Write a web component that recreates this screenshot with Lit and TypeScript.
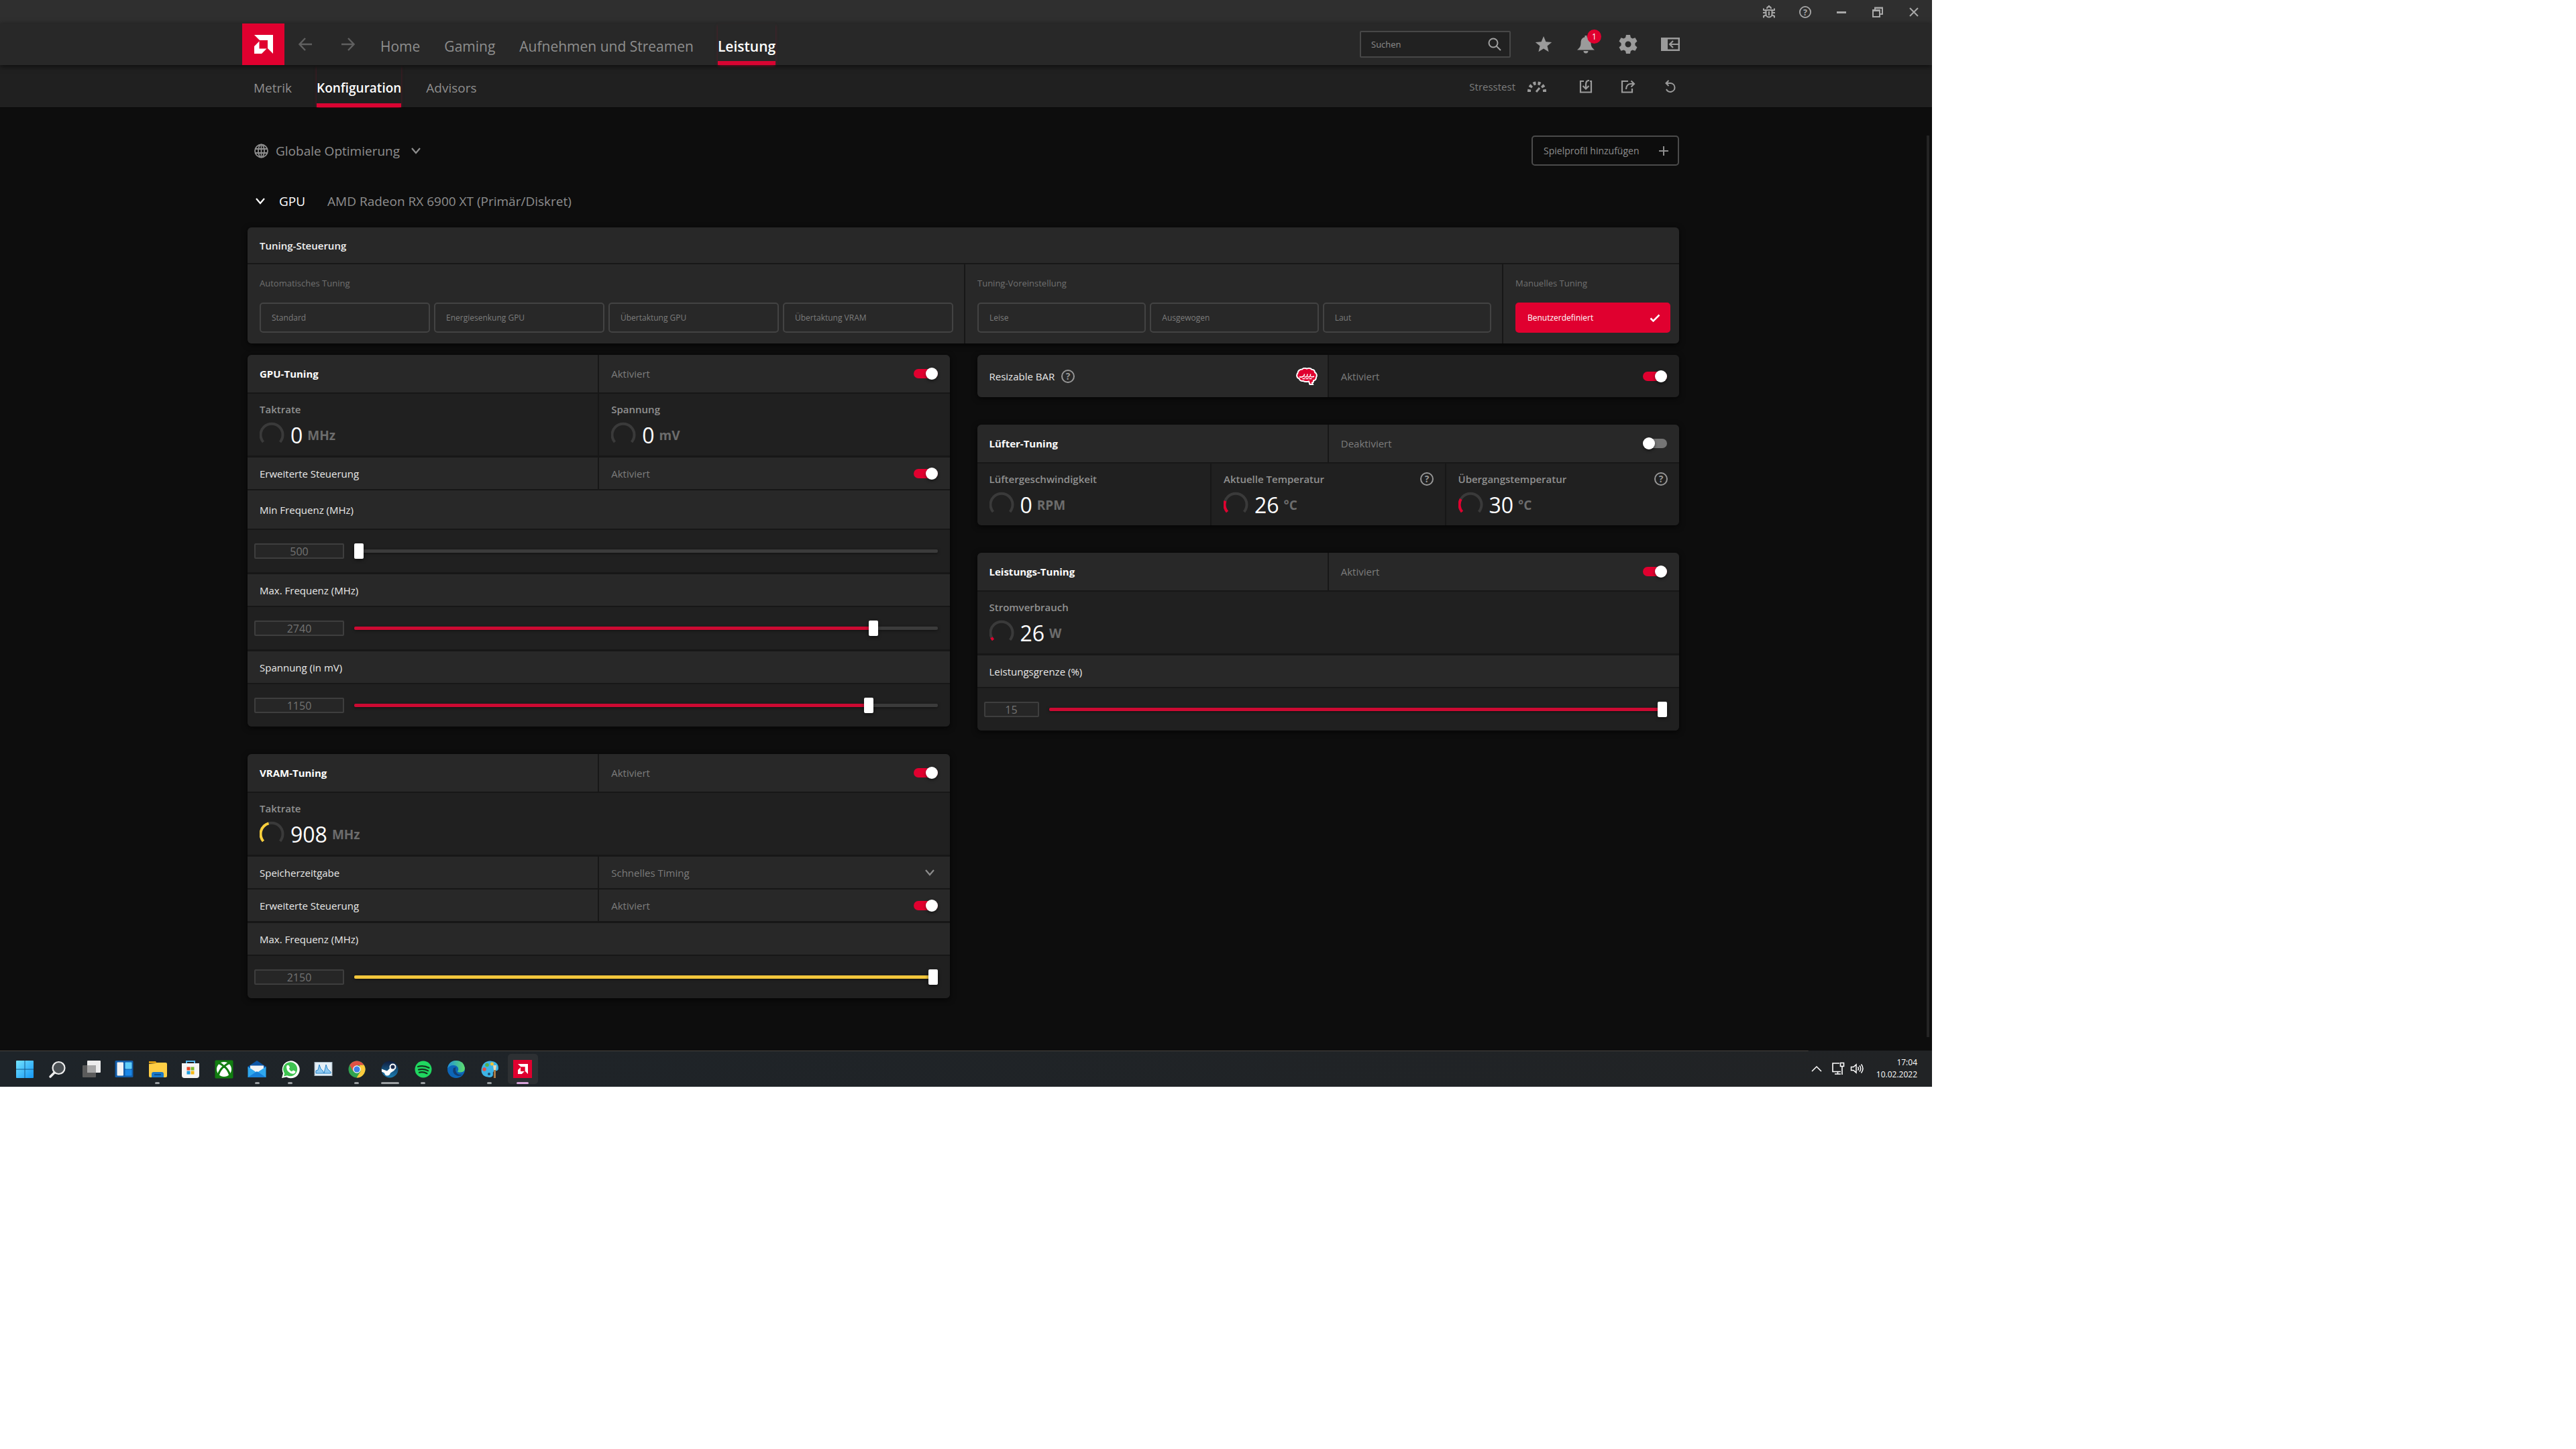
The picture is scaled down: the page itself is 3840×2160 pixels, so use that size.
import { LitElement, html, svg, css, nothing, type TemplateResult } from "lit";
import { customElement, property } from "lit/decorators.js";
import { classMap } from "lit/directives/class-map.js";
import { styleMap } from "lit/directives/style-map.js";

type Part = TemplateResult | typeof nothing;

const stroke = (w: number, h: number, body: unknown, width = 2, box = `0 0 ${w} ${h}`) => html`
  <svg width=${w} height=${h} viewBox=${box} fill="none" stroke="currentColor" stroke-width=${width} aria-hidden="true">${body}</svg>`;
const solid = (w: number, h: number, body: unknown, box = `0 0 ${w} ${h}`) => html`
  <svg width=${w} height=${h} viewBox=${box} fill="currentColor" aria-hidden="true">${body}</svg>`;

const chevronDown = stroke(16, 10, svg`<path d="M2 1l6 7 6-7"/>`, 2.200);
const helpIcon = (size: number) => stroke(size, size, svg`
  <circle cx="10" cy="10" r="9"/>
  <text x="10" y="15" text-anchor="middle" font-size="14" font-weight="700" fill="currentColor" stroke="none">?</text>`, 2, "0 0 20 20");
const amdMark = (size: number) => solid(size, size, svg`
  <path d="M0 0h28v28l-8-8V8H8z"/><path d="M7.500 9.500L0 17v11h11l7.500-7.500h-11z"/>`, "0 0 28 28");

const icons = {
  back: stroke(20, 20, svg`<path d="M20 10H2M10 1l-8.500 9 8.500 9"/>`, 2.400),
  forward: stroke(20, 20, svg`<path d="M0 10h18M10 1l8.500 9-8.500 9"/>`, 2.400),
  search: stroke(20, 20, svg`<circle cx="8" cy="8" r="6.500"/><path d="M12.500 12.500l6.500 6.500"/>`),
  bug: stroke(20, 20, svg`<path d="M7 5a3 3 0 0 1 6 0M5.500 7h9v6a4.500 4.500 0 0 1-9 0zM1 11h4.500M14.500 11H19M2 4.500v2.500l3.500 1M18 4.500V7l-3.500 1M2 18.500V16l3.500-1.500M18 18.500V16l-3.500-1.500M10 9v6"/><path d="M10 0v3" />`),
  minimise: solid(14, 4, svg`<path d="M0 1h14v3H0z"/>`),
  restore: stroke(16, 16, svg`<path d="M1 5h10v10H1zM4 4V1.500h11V11h-3"/><path d="M1 6h10M4 2h11" />`),
  close: stroke(14, 14, svg`<path d="M1 1l12 12M13 1L1 13"/>`),
  star: solid(26, 26, svg`<path d="M13 1l3.400 8.200 8.800.7-6.700 5.700 2.100 8.700L13 19.600l-7.600 4.700 2.100-8.700L.8 9.900l8.800-.7z"/>`),
  bell: solid(28, 28, svg`<path d="M12.500 1h3v2.200c4 .9 6 4 6 8.300 0 5.500 1.500 7.500 5.500 11H1c4-3.500 5.500-5.500 5.500-11 0-4.300 2-7.400 6-8.300zM10.500 24h7a3.500 3.500 0 0 1-7 0z"/>`),
  gear: solid(28, 28, svg`<path fill-rule="evenodd" d="M11 0h6l.9 4.100 2.600 1.500 4-1.300 3 5.200-3.100 2.900v3.200l3.100 2.900-3 5.200-4-1.300-2.600 1.500L17 28h-6l-.9-4-2.600-1.500-4 1.300-3-5.200 3.100-2.900v-3.200L.5 9.500l3-5.200 4 1.300 2.600-1.500zM14 9.500a4.500 4.500 0 1 0 0 9 4.500 4.500 0 0 0 0-9z"/>`),
  panel: html`<svg width="28" height="20" viewBox="0 0 28 20" fill="none" stroke="currentColor" stroke-width="2.500" aria-hidden="true">
    <path d="M1.200 1.200h25.600v17.600H1.200z"/><path d="M1 1h9v18H1z" fill="currentColor" stroke="none"/><path d="M27 10H13M18 5l-5 5 5 5" stroke-width="2.200"/></svg>`,
  stress: stroke(28, 18, svg`<path d="M2.500 17v-1a11.500 12 0 0 1 23 0v1" pathLength="100" stroke-width="5" stroke-dasharray="10 8"/><path d="M13 17l5-6" stroke-width="3"/>`),
  importIcon: stroke(20, 20, svg`<path d="M7 2H2v16.500h16V2h-2"/><path d="M15 1c-4 0-5 3-5 6v6M5.500 9l4.500 4.500L14.500 9"/>`, 2.200),
  exportIcon: stroke(22, 20, svg`<path d="M11 2H2v16.500h15V13"/><path d="M8 14c0-5 3-8 6-8h6M15.500 1.500L20 6l-4.500 4.500"/>`, 2.200),
  reset: stroke(18, 20, svg`<path d="M3 5h6.500a6.500 6.500 0 1 1-6.500 9M6.500 1L2.500 5l4 4"/>`),
  globe: stroke(22, 22, svg`<circle cx="10.500" cy="11" r="9.500"/><ellipse cx="10.500" cy="11" rx="4.500" ry="9.500"/><path d="M1.500 8h18M1.500 14h18M10.500 1v20"/>`, 1.800),
  plus: stroke(14, 14, svg`<path d="M7 0v14M0 7h14"/>`),
  check: stroke(16, 12, svg`<path d="M1.500 6.500L5.500 10.500 14.500 1.500"/>`, 2.500),
  brain: html`<svg width="32" height="26" viewBox="0 0 32 26" aria-hidden="true">
    <path d="M9 2.500c2-2 5-1.800 7-.8 2-1 5.500-.9 7.500 1C26.500 3 28 5 28 7c3 1.500 3.500 5 2 7.500 0 3-2 4.500-4 4.800.2 2-.5 3-2 3.200L25 25h-4.500l-1.500-4.500c-4 1-7 .5-8.500-.7-3 .5-5.500-1-5.700-3.300C1 15.500 0 11 2.500 8 2.500 5 5.500 2.500 9 2.500z" fill="#e0002f" stroke="#fff" stroke-width="2"/>
    <path d="M5 13.500c2 1.500 4 .5 6-.5 1-.5 1.500-1.500 1.500-3.500M12.500 13.500c2 1 4.500.5 4.500-4M17 13.500c2 1 5 .5 4.500-4M22 13.500c2 .5 3.500.3 5-.5" fill="none" stroke="#fff" stroke-width="1.600"/>
    <path d="M9.500 16.500h14" stroke="#fff" stroke-width="1.600" stroke-dasharray="4 1"/></svg>`,
  caretUp: stroke(16, 10, svg`<path d="M1 9l7-7 7 7"/>`, 1.500),
  network: stroke(20, 20, svg`<path d="M12 2H2v12.500h12M5 18h9M9.500 14.500V18"/><path d="M13.500 1.500h5v5h-5zM16 7v12" />`, 1.600),
  speaker: stroke(20, 16, svg`<path d="M1.500 5.500H5L9 2v12l-4-3.500H1.500z"/><path d="M11.500 5.500q2 2.500 0 5M14 3.500q3.500 4.500 0 9M16.500 1.500q5 6.500 0 13"/>`, 1.500),
};

const app = (body: unknown) => html`<svg width="28" height="28" viewBox="0 0 28 28" aria-hidden="true">${body}</svg>`;

interface TaskApp { name: string; mark?: "dot" | "wide"; active?: boolean; icon: Part }

const taskApps: TaskApp[] = [
  { name: "Start", icon: app(svg`
      <defs><linearGradient id="w" x1="0" y1="0" x2="1" y2="1"><stop offset="0" stop-color="#74e4ff"/><stop offset="1" stop-color="#1597f5"/></linearGradient></defs>
      <rect x="1" y="1" width="26" height="26" rx="1" fill="url(#w)"/><path d="M14 1v26M1 14h26" stroke="#14598a" stroke-width="1"/>`) },
  { name: "Suche", icon: app(svg`
      <circle cx="15.500" cy="12" r="9" fill="#4b5054" stroke="#ececec" stroke-width="2.200"/><path d="M9 19l-6 6" stroke="#ececec" stroke-width="3.500" stroke-linecap="round"/>`) },
  { name: "Taskansicht", icon: app(svg`
      <rect x="8" y="1" width="20" height="18" rx="1" fill="#ececec"/><rect x="1" y="8" width="20" height="18" rx="1" fill="#5b5b5b"/><path d="M8 8h13v11H8z" fill="#a5a5a5"/>`) },
  { name: "Widgets", icon: app(svg`
      <rect x=".5" y="1" width="27" height="25" rx="1.500" fill="#125ca8"/><rect x="3.500" y="3.500" width="9.500" height="20" rx="1" fill="#f3f3f3"/><rect x="15.500" y="3.500" width="10" height="10" rx="1" fill="#60cdf9"/><rect x="15.500" y="14.500" width="10" height="9" rx="1" fill="#1a86e6"/>`) },
  { name: "Explorer", mark: "dot", icon: app(svg`
      <path d="M1 2h10l2 3h-12z" fill="#d99a12"/><path d="M1 6l10-1 2-1h13q2 0 2 2v18q0 2-2 2H3q-2 0-2-2z" fill="#ffce45"/><path d="M5 26v-5q0-3 3-3h12q3 0 3 3v5z" fill="#1b78c8"/><path d="M9 22h10" stroke="#0c4f90" stroke-width="2"/>`) },
  { name: "Store", icon: app(svg`
      <path d="M8 6V2h12v4" fill="none" stroke="#55b8ee" stroke-width="2"/><path d="M1 5h26v18q0 4-4 4H5q-4 0-4-4z" fill="#f6f6f6"/>
      <path d="M8.500 10.500h5v5h-5z" fill="#e5482a"/><path d="M14.500 10.500h5v5h-5z" fill="#7cb82f"/><path d="M8.500 16.500h5v5h-5z" fill="#1e9fe0"/><path d="M14.500 16.500h5v5h-5z" fill="#f8b916"/>`) },
  { name: "Xbox", icon: app(svg`
      <rect x=".5" y=".5" width="27" height="27" rx="1.500" fill="#117d10"/><circle cx="14" cy="14" r="11" fill="#fff"/>
      <path d="M6 5q3 0 8 5 5-5 8-5M5.500 22Q8 14 14 9.500 20 14 22.500 22" fill="none" stroke="#117d10" stroke-width="3"/>`) },
  { name: "Mail", mark: "dot", icon: app(svg`
      <path d="M.5 10L14 1l13.500 9v4H.500z" fill="#0d55a5"/><path d="M4 8.500h20v8L14 22 4 16z" fill="#f4f4f4"/><path d="M.5 10L14 19l13.500-9v16H.500z" fill="#2fa7ee"/><path d="M27.500 26L14 17 .5 26z" fill="#1780d8"/>`) },
  { name: "WhatsApp", mark: "dot", icon: app(svg`
      <path d="M1 27l2-7A13 13 0 1 1 8 25.500z" fill="#fff"/><path d="M4 24.500l1.200-4.500a10.500 10.500 0 1 1 3.800 3.200z" fill="#3fc351"/>
      <path d="M9 8q2-1 3 1l1 2q0 1-1.200 2.200 1.500 3 4.200 4l1.500-1.500q.5-.5 1.500 0l2.500 1.500q-.3 3.300-4 3.600Q8.500 19 8 11q0-2 1-3z" fill="#fff"/>`) },
  { name: "Leistungsmonitor", icon: app(svg`
      <rect x="1" y="3.500" width="26" height="20" fill="#e4eef5" stroke="#9fb0bd"/><path d="M3 20v-4l3-1 2-8 2 6 3 3 2 4 3-13 2 6 5 5v2z" fill="#8cc9f2" stroke="#2f86c9"/>`) },
  { name: "Chrome", mark: "dot", icon: app(svg`
      <circle cx="14" cy="14" r="12.500" fill="#31a350"/><path d="M3.200 7.700A12.500 12.500 0 0 1 24.800 7.700L14 8l-5.500 9z" fill="#de5145"/><path d="M24.800 7.700A12.500 12.500 0 0 1 13.500 26.500L19.500 17 18 7.700z" fill="#fccb3d"/>
      <circle cx="14" cy="14" r="5.800" fill="#fff"/><circle cx="14" cy="14" r="4.600" fill="#3f7fe8"/>`) },
  { name: "Steam", mark: "wide", icon: app(svg`
      <defs><linearGradient id="s" x1="0" y1="0" x2="0" y2="1"><stop offset="0" stop-color="#101c3c"/><stop offset="1" stop-color="#1b7fb4"/></linearGradient></defs>
      <circle cx="14" cy="14" r="12.500" fill="url(#s)"/><path d="M2 13.500l8 3 6-6 5 5-6 4q-1 4-5 4-3 0-4-4l-4-2z" fill="#fff"/><circle cx="18.500" cy="10.500" r="4" fill="#1b2b4d" stroke="#fff" stroke-width="2"/>`) },
  { name: "Spotify", mark: "dot", icon: app(svg`
      <circle cx="14" cy="14" r="12.500" fill="#20d760"/><path d="M6 10q8.500-2.500 16.500 1.800M7 14.500q7.500-2 14 1.600M8 18.700q6-1.500 11.500 1.500" fill="none" stroke="#14351f" stroke-width="2.200" stroke-linecap="round"/>`) },
  { name: "Edge", icon: app(svg`
      <defs><linearGradient id="e" x1="0" y1="0" x2="1" y2="0"><stop offset="0" stop-color="#1f8fdc"/><stop offset="1" stop-color="#5fe06a"/></linearGradient></defs>
      <circle cx="14" cy="14" r="13" fill="#0c65b8"/><path d="M1 13Q3 1 14 1t13 11q0 6-6.500 6.500-4 0-4.500-1.500 2-2 1-5-2-4-7-4-6 0-9 5z" fill="url(#e)"/><path d="M10 12q-3 9 7 12 4 0 6-2-9 1-10-7 0-3 1-4z" fill="#123f73"/>`) },
  { name: "Paint", mark: "dot", icon: app(svg`
      <path d="M15 1.500q12 1 12 11 0 4-5 4-4 0-3 5 0 4-5 4.500Q1 25 1.500 14.500 3 2 15 1.500z" fill="#3db4e6"/><circle cx="6" cy="14" r="2.800" fill="#e2504a"/><circle cx="10" cy="7.500" r="2.800" fill="#55b04b"/><circle cx="17.500" cy="6" r="2.500" fill="#f0c13a"/><circle cx="13" cy="21" r="2" fill="#20496a"/>
      <path d="M19 8h5l-1 7h-3z" fill="#e9d9b5"/><path d="M20 15h3v12h-3z" fill="#a77a45"/>`) },
  { name: "AMD Software", active: true, icon: nothing },
];

/* On/off switch with its own status caption. */
@customElement("status-switch")
class StatusSwitch extends LitElement {
  @property({ type: Boolean }) on = false;
  @property() label = "";
  static styles = css`
    :host { display: block; flex: 1; }
    .line { display: flex; align-items: center; justify-content: space-between; color: #7c7c7c; cursor: pointer; }
    .switch { appearance: none; display: flex; align-items: center; width: 36px; height: 14px; margin: 0; border-radius: 7px; background: #757575; }
    .switch::before { content: ""; width: 18px; height: 18px; flex: none; border-radius: 50%; background: #fff; box-shadow: 0 2px 4px rgba(0, 0, 0, 0.5); }
    .switch:checked { justify-content: flex-end; background: #e0002f; }
  `;
  render() {
    return html`<label class="line"><span>${this.on ? "Aktiviert" : "Deaktiviert"}</span>
      <input class="switch" type="checkbox" role="switch" aria-label=${this.label} .checked=${this.on}
        @change=${(e: Event) => { this.on = (e.target as HTMLInputElement).checked; }}></label>`;
  }
}

/* Round gauge, reading and unit under a caption. */
@customElement("gauge-reading")
class GaugeReading extends LitElement {
  @property() label = "";
  @property() value = "0";
  @property() unit = "";
  @property({ type: Number }) level = 0;
  @property() tone = "#e0002f";
  @property({ type: Boolean }) help = false;
  static styles = css`
    :host { display: block; box-sizing: border-box; height: 92px; padding: 13px 17px 0 18px; background: #202020; }
    .head { display: flex; justify-content: space-between; height: 20px; margin-bottom: 8px; line-height: 20px; font-weight: 600; color: #909090; }
    .help { display: flex; height: 20px; padding: 0; border: 0; background: none; color: #969696; font: inherit; }
    .body { display: flex; align-items: center; height: 36px; }
    .text { display: flex; align-items: center; gap: 7px; padding: 6px 0 0 8px; }
    .value { font-size: 32px; line-height: 32px; color: #fff; }
    .unit { font-size: 19px; line-height: 32px; font-weight: 700; color: #6c6c6c; }
  `;
  render() {
    const arc = "M5.500 31A16.500 16.500 0 1 1 30.500 31";
    return html`
      <div class="head"><span>${this.label}</span>
        ${this.help ? html`<button class="help" aria-label="Hilfe">${helpIcon(20)}</button>` : nothing}</div>
      <div class="body">
        <svg width="38" height="36" viewBox="0 0 38 36" fill="none" stroke-width="4" aria-hidden="true">
          <path d=${arc} stroke="#3a3a3a"/>
          ${this.level ? svg`<path d=${arc} pathLength="100" stroke=${this.tone} stroke-dasharray="${this.level} 200"/>` : nothing}
        </svg>
        <div class="text"><span class="value">${this.value}</span><span class="unit">${this.unit}</span></div>
      </div>`;
  }
}

/* Caption row, number field and slider. */
@customElement("value-slider")
class ValueSlider extends LitElement {
  @property() label = "";
  @property({ type: Number }) value = 0;
  @property({ type: Number }) min = 0;
  @property({ type: Number }) max = 100;
  @property() tone = "#cc0a32";
  @property({ type: Boolean }) tall = false;
  @property({ type: Boolean }) narrow = false;
  static styles = css`
    :host { display: grid; gap: 2px; }
    .caption { display: flex; align-items: center; box-sizing: border-box; height: 47px; padding: 0 18px; background: #282828; color: #e8e8e8; }
    .tall { height: 57px; }
    .control { display: flex; align-items: center; gap: 15px; height: 63px; padding: 0 18px 0 10px; background: #202020; }
    .field { box-sizing: border-box; width: 134px; height: 23px; padding: 0; border: 2px solid #3e3e3e; border-radius: 2px; background: #262626; color: #727272; font: 16px/19px "Open Sans", sans-serif; text-align: center; }
    .small { width: 82px; }
    .range { appearance: none; flex: 1; min-width: 0; height: 24px; margin: 0; background: none; }
    .range::-webkit-slider-runnable-track { height: 5px; border-radius: 2px; background: linear-gradient(var(--tone), var(--tone)) 0 / var(--fill) 100% no-repeat #3b3b3b; box-shadow: 0 1px 4px rgba(0, 0, 0, 0.5); }
    .range::-webkit-slider-thumb { appearance: none; width: 14px; height: 23px; margin-top: -9px; border-radius: 2px; background: #fff; box-shadow: 0 2px 5px rgba(0, 0, 0, 0.5); }
  `;
  render() {
    const share = (this.value - this.min) / (this.max - this.min);
    return html`
      <label class=${classMap({ caption: true, tall: this.tall })} for="range">${this.label}</label>
      <div class="control">
        <input class=${classMap({ field: true, small: this.narrow })} type="text" inputmode="numeric" aria-label=${this.label} .value=${String(this.value)}>
        <input class="range" id="range" type="range" min=${this.min} max=${this.max} .value=${String(this.value)}
          style=${styleMap({ "--tone": this.tone, "--fill": `${share * 99}%` })}
          @input=${(e: Event) => { this.value = Number((e.target as HTMLInputElement).value); }}>
      </div>`;
  }
}

@customElement("app-root")
class AppRoot extends LitElement {
  static styles = css`
    :host { display: block; min-height: 100vh; background: #fff; font: 15px/20px "Open Sans", "Noto Sans", sans-serif; color: #8e8e8e; }
    svg { display: block; flex: none; }
    button { font: inherit; color: inherit; border: 0; padding: 0; background: none; cursor: pointer; }
    a { color: inherit; text-decoration: none; }
    .desktop { display: flex; flex-direction: column; width: 75vw; min-height: 75vh; overflow: clip; background: #0d0d0d; }

    .titlebar { display: flex; justify-content: flex-end; height: 35px; background: #2f2f2f; color: #a8a8a8; }
    .caption-button { display: grid; place-items: center; width: 54px; height: 35px; }

    .topbar { display: flex; align-items: center; height: 62px; padding: 0 359px 0 361px; background: #282828; box-shadow: 0 2px 8px rgba(0, 0, 0, 0.6); position: relative; }
    .logo { display: grid; place-items: center; width: 63px; height: 62px; background: #e0002f; color: #fff; }
    .history { display: flex; gap: 44px; margin: 0 38px 0 21px; color: #606060; }
    .links { display: flex; flex: 1; gap: 36px; font-size: 21px; }
    .link { display: flex; align-items: center; box-sizing: border-box; height: 62px; padding-top: 11px; border-bottom: 6px solid transparent; }
    .current { color: #fff; font-weight: 600; border-color: #d90432; box-shadow: 0 2px 4px -1px rgba(217, 4, 50, 0.5); }
    .search { display: flex; align-items: center; box-sizing: border-box; width: 225px; height: 40px; margin-right: 17px; padding: 0 12px 0 15px; border: 2px solid #474747; border-radius: 2px; background: #212121; color: #a0a0a0; }
    .search-field { flex: 1; min-width: 0; padding: 0; border: 0; outline: 0; background: none; font: 13px/20px "Open Sans", sans-serif; color: #a0a0a0; }
    .search-field::placeholder { color: #8c8c8c; }
    .slots { display: flex; color: #9b9b9b; }
    .slot { display: grid; place-items: center; width: 63px; height: 40px; position: relative; }
    .badge { position: absolute; left: 34px; top: -2px; width: 21px; height: 21px; border-radius: 50%; background: #e0002f; color: #fff; font-size: 12px; line-height: 21px; text-align: center; }

    .subbar { display: flex; align-items: center; height: 64px; padding: 0 359px 0 378px; background: #202020; border-bottom: 1px solid #060606; box-sizing: border-box; }
    .sublinks { gap: 37px; font-size: 19px; }
    .sublinks .link { height: 63px; padding-top: 10px; }
    .stress { display: flex; align-items: center; gap: 18px; margin-right: 27px; font-size: 15px; color: #7d7d7d; }
    .stress svg { color: #9b9b9b; }

    .main { flex: 1; display: flex; flex-direction: column; padding: 41px 377px 75px 369px; background: linear-gradient(#242424, #242424) right 4px top 41px / 4px calc(100% - 61px) no-repeat #0d0d0d; }
    .row { display: flex; align-items: center; justify-content: space-between; height: 45px; }
    .scope { display: flex; align-items: center; gap: 10px; padding: 1px 10px 0; font-size: 19px; }
    .scope svg:last-child { margin-left: 6px; }
    .add { display: flex; align-items: center; justify-content: space-between; box-sizing: border-box; width: 220px; height: 45px; padding: 1px 14px 0 16px; border: 2px solid #4b4b4b; border-radius: 5px; font-size: 14px; }
    .device { display: flex; align-items: center; box-sizing: border-box; height: 92px; padding: 14px 10px 0 11px; font-size: 19px; }
    .device-toggle { display: flex; align-items: center; gap: 20px; margin-right: 33px; color: #fff; }

    .card { display: grid; gap: 2px; overflow: hidden; border-radius: 6px; background: #171717; box-shadow: 0 2px 8px rgba(0, 0, 0, 0.7); }
    .heading { display: flex; align-items: center; box-sizing: border-box; margin: 0; padding: 0 18px; background: #282828; font-size: 15px; font-weight: 600; color: #f2f2f2; }
    .heading.wide { height: 53px; }
    .presets { display: grid; grid-template-columns: 1068fr 800fr 262fr; gap: 2px; height: 118px; }
    .preset-group { padding: 18px 16px 0 18px; background: #282828; font-size: 13px; color: #707070; }
    .preset-group:last-child { padding-right: 13px; }
    .options { display: flex; gap: 6px; margin-top: 19px; }
    .option { display: flex; align-items: center; justify-content: space-between; flex: 1 1 0; min-width: 0; box-sizing: border-box; height: 45px; padding: 0 13px 0 16px; border: 2px solid #434343; border-radius: 5px; font-size: 12px; color: #7c7c7c; }
    .chosen { border-color: #e0002f; background: #e0002f; color: #fff; }

    .columns { display: grid; grid-template-columns: 1fr 1fr; gap: 41px; align-items: start; margin-top: 17px; }
    .column { display: grid; gap: 41px; }
    .split { display: grid; grid-template-columns: 1fr 1fr; gap: 2px; }
    .thirds { display: grid; grid-template-columns: 1fr 1fr 1fr; gap: 2px; }
    .cell { display: flex; align-items: center; box-sizing: border-box; height: 47px; padding: 0 18px; background: #282828; color: #e8e8e8; }
    .split .heading, .head-cell { height: 56px; font-weight: 700; color: #fff; }
    .head-cell { font-weight: 400; }
    .bar-cell { height: 63px; gap: 12px; }
    .dark { background: #202020; }
    .spread { justify-content: space-between; padding-right: 15px; }
    .with-help { display: flex; align-items: center; gap: 10px; }
    .help { display: flex; color: #969696; }
    .after-reading, .step { margin-top: 1px; }
    .select { appearance: none; flex: 1; min-width: 0; border: 0; padding: 0; background: none; color: #7c7c7c; font: inherit; }
    .picker { padding-right: 22px; color: #8c8c8c; }

    .taskbar { display: flex; align-items: center; justify-content: space-between; height: 54px; padding: 0 22px 0 12px; color: #fff; background: linear-gradient(#47443f, #47443f) 0 0 / 93.6% 1px no-repeat, linear-gradient(90deg, #1e2429, #212325); }
    .apps { display: grid; grid-template-columns: repeat(16, 1fr); width: 27.5vw; max-width: 792px; }
    .app { display: grid; justify-items: center; align-content: space-between; justify-self: center; box-sizing: border-box; width: 45px; height: 45px; padding-top: 9px; border-radius: 5px; }
    .open { background: #2d3033; }
    .mark { width: 7px; height: 3px; border-radius: 2px; }
    .dot { background: #9b9fa2; }
    .wide-mark { width: 27px; background: #9b9fa2; }
    .active-mark { width: 18px; background: #d7a3da; }
    .amd-tile { display: grid; place-items: center; width: 28px; height: 27px; background: #e0002f; color: #fff; }
    .tray { display: flex; align-items: center; gap: 14px; }
    .tray-pair { display: flex; align-items: center; gap: 8px; }
    .clock { margin-left: 5px; font-size: 12px; line-height: 18px; text-align: right; }
  `;

  private header(title: string, on: boolean) {
    return html`<div class="split"><h2 class="heading">${title}</h2>
      <div class="cell head-cell"><status-switch label=${title} ?on=${on}></status-switch></div></div>`;
  }

  private advanced(area: string) {
    return html`<div class="split"><div class="cell">Erweiterte Steuerung</div>
      <div class="cell"><status-switch label="Erweiterte Steuerung ${area}" on></status-switch></div></div>`;
  }

  private presets(title: string, names: string[], chosen = false) {
    return html`<div class="preset-group"><div>${title}</div>
      <div class="options">${names.map((n) => html`
        <button class=${classMap({ option: true, chosen })}>${n}${chosen ? icons.check : nothing}</button>`)}</div></div>`;
  }

  private taskApp(a: TaskApp) {
    return html`<button class=${classMap({ app: true, open: !!a.active })} aria-label=${a.name}>
      ${a.active ? html`<span class="amd-tile">${amdMark(15)}</span>` : a.icon}
      <span class=${classMap({ mark: true, dot: a.mark === "dot", "wide-mark": a.mark === "wide", "active-mark": !!a.active })}></span>
    </button>`;
  }

  render() {
    return html`
      <div class="desktop">
        <div class="titlebar">
          <button class="caption-button" aria-label="Fehler melden">${icons.bug}</button>
          <button class="caption-button" aria-label="Hilfe">${helpIcon(18)}</button>
          <button class="caption-button" aria-label="Minimieren">${icons.minimise}</button>
          <button class="caption-button" aria-label="Wiederherstellen">${icons.restore}</button>
          <button class="caption-button" aria-label="Schließen">${icons.close}</button>
        </div>
        <header class="topbar">
          <a class="logo" href="#home" aria-label="AMD">${amdMark(28)}</a>
          <div class="history">
            <button aria-label="Zurück">${icons.back}</button>
            <button aria-label="Vorwärts">${icons.forward}</button>
          </div>
          <nav class="links">
            <a class="link" href="#home">Home</a>
            <a class="link" href="#gaming">Gaming</a>
            <a class="link" href="#aufnehmen">Aufnehmen und Streamen</a>
            <a class="link current" href="#leistung" aria-current="page">Leistung</a>
          </nav>
          <label class="search"><input class="search-field" type="search" placeholder="Suchen" aria-label="Suchen">${icons.search}</label>
          <div class="slots">
            <button class="slot" aria-label="Favoriten">${icons.star}</button>
            <button class="slot" aria-label="Benachrichtigungen">${icons.bell}<span class="badge">1</span></button>
            <button class="slot" aria-label="Einstellungen">${icons.gear}</button>
            <button class="slot" aria-label="Seitenleiste">${icons.panel}</button>
          </div>
        </header>
        <div class="subbar">
          <nav class="links sublinks">
            <a class="link" href="#metrik">Metrik</a>
            <a class="link current" href="#konfiguration" aria-current="page">Konfiguration</a>
            <a class="link" href="#advisors">Advisors</a>
          </nav>
          <button class="stress">Stresstest ${icons.stress}</button>
          <div class="slots">
            <button class="slot" aria-label="Importieren">${icons.importIcon}</button>
            <button class="slot" aria-label="Exportieren">${icons.exportIcon}</button>
            <button class="slot" aria-label="Zurücksetzen">${icons.reset}</button>
          </div>
        </div>

        <main class="main">
          <div class="row">
            <button class="scope">${icons.globe}<span>Globale Optimierung</span>${chevronDown}</button>
            <button class="add">Spielprofil hinzufügen ${icons.plus}</button>
          </div>
          <div class="device">
            <button class="device-toggle">${chevronDown}<span>GPU</span></button>
            <span>AMD Radeon RX 6900 XT (Primär/Diskret)</span>
          </div>

          <section class="card">
            <h2 class="heading wide">Tuning-Steuerung</h2>
            <div class="presets">
              ${this.presets("Automatisches Tuning", ["Standard", "Energiesenkung GPU", "Übertaktung GPU", "Übertaktung VRAM"])}
              ${this.presets("Tuning-Voreinstellung", ["Leise", "Ausgewogen", "Laut"])}
              ${this.presets("Manuelles Tuning", ["Benutzerdefiniert"], true)}
            </div>
          </section>

          <div class="columns">
            <div class="column">
              <section class="card">
                ${this.header("GPU-Tuning", true)}
                <div class="split">
                  <gauge-reading label="Taktrate" value="0" unit="MHz"></gauge-reading>
                  <gauge-reading label="Spannung" value="0" unit="mV"></gauge-reading>
                </div>
                <div class="after-reading">${this.advanced("GPU")}</div>
                <value-slider label="Min Frequenz (MHz)" min="500" max="3000" value="500" tall></value-slider>
                <value-slider class="step" label="Max. Frequenz (MHz)" min="500" max="3000" value="2740"></value-slider>
                <value-slider class="step" label="Spannung (in mV)" min="750" max="1200" value="1150"></value-slider>
              </section>
              <section class="card">
                ${this.header("VRAM-Tuning", true)}
                <gauge-reading label="Taktrate" value="908" unit="MHz" level="44" tone="#fbcf3b"></gauge-reading>
                <div class="split after-reading">
                  <label class="cell" for="timing">Speicherzeitgabe</label>
                  <div class="cell picker">
                    <select class="select" id="timing"><option>Schnelles Timing</option></select>${chevronDown}
                  </div>
                </div>
                ${this.advanced("VRAM")}
                <value-slider class="step" label="Max. Frequenz (MHz)" min="2000" max="2150" value="2150" tone="#f2c63c"></value-slider>
              </section>
            </div>
            <div class="column">
              <section class="card split">
                <div class="cell bar-cell spread">
                  <span class="with-help">Resizable BAR <button class="help" aria-label="Hilfe">${helpIcon(20)}</button></span>
                  ${icons.brain}
                </div>
                <div class="cell bar-cell dark"><status-switch label="Resizable BAR" on></status-switch></div>
              </section>
              <section class="card">
                ${this.header("Lüfter-Tuning", false)}
                <div class="thirds">
                  <gauge-reading label="Lüftergeschwindigkeit" value="0" unit="RPM"></gauge-reading>
                  <gauge-reading label="Aktuelle Temperatur" value="26" unit="°C" level="23" help></gauge-reading>
                  <gauge-reading label="Übergangstemperatur" value="30" unit="°C" level="27" help></gauge-reading>
                </div>
              </section>
              <section class="card">
                ${this.header("Leistungs-Tuning", true)}
                <gauge-reading label="Stromverbrauch" value="26" unit="W" level="6"></gauge-reading>
                <value-slider class="after-reading" label="Leistungsgrenze (%)" min="0" max="15" value="15" narrow></value-slider>
              </section>
            </div>
          </div>
        </main>

        <footer class="taskbar">
          <div class="apps">${taskApps.map((a) => this.taskApp(a))}</div>
          <div class="tray">
            <button aria-label="Ausgeblendete Symbole">${icons.caretUp}</button>
            <div class="tray-pair">${icons.network}${icons.speaker}</div>
            <div class="clock"><div>17:04</div><div>10.02.2022</div></div>
          </div>
        </footer>
      </div>`;
  }
}
